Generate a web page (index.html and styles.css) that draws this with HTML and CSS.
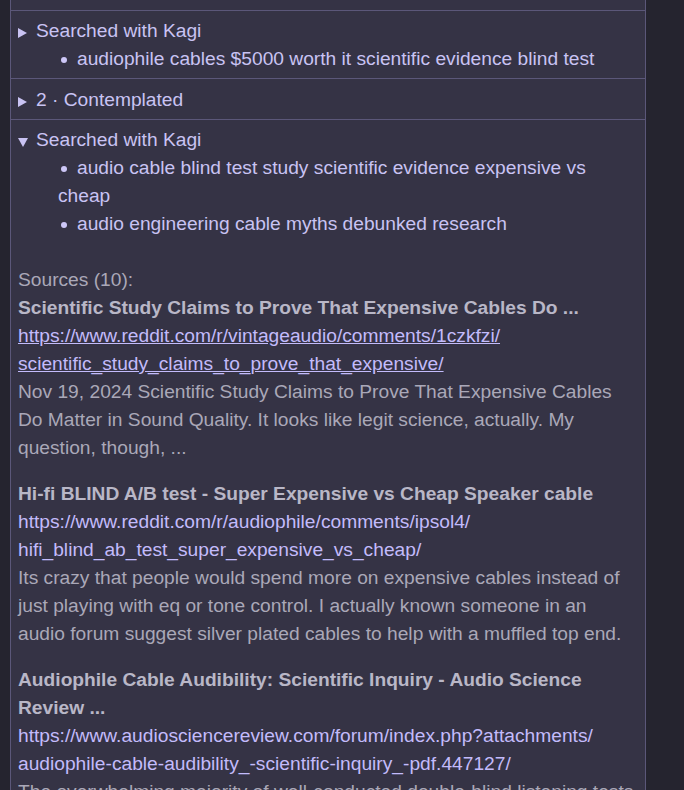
FILE: index.html
```html
<!DOCTYPE html>
<html lang="en">
<head>
<meta charset="utf-8">
<title>Kagi search steps</title>
<link rel="stylesheet" href="styles.css">
</head>
<body>
<div class="panel">
  <div class="prev"></div>
  <div class="step">
    <details><summary>Searched with Kagi</summary></details>
    <ul class="queries">
      <li>audiophile cables $5000 worth it scientific evidence blind test</li>
    </ul>
  </div>
  <div class="step single">
    <details><summary>2 · Contemplated</summary></details>
  </div>
  <div class="step">
    <details open>
      <summary>Searched with Kagi</summary>
      <ul class="queries">
        <li>audio cable blind test study scientific evidence expensive vs cheap</li>
        <li>audio engineering cable myths debunked research</li>
      </ul>
      <div class="sources">
        <p class="sources-head">Sources (10):</p>
        <div class="source">
          <p class="title">Scientific Study Claims to Prove That Expensive Cables Do ...</p>
          <a class="url hover" href="#">https://www.reddit.com/r/vintageaudio/comments/1czkfzi/<br>scientific_study_claims_to_prove_that_expensive/</a>
          <p class="desc">Nov 19, 2024 Scientific Study Claims to Prove That Expensive Cables Do Matter in Sound Quality. It looks like legit science, actually. My question, though, ...</p>
        </div>
        <div class="source">
          <p class="title">Hi-fi BLIND A/B test - Super Expensive vs Cheap Speaker cable</p>
          <a class="url" href="#">https://www.reddit.com/r/audiophile/comments/ipsol4/<br>hifi_blind_ab_test_super_expensive_vs_cheap/</a>
          <p class="desc">Its crazy that people would spend more on expensive cables instead of just playing with eq or tone control. I actually known someone in an audio forum suggest silver plated cables to help with a muffled top end.</p>
        </div>
        <div class="source">
          <p class="title">Audiophile Cable Audibility: Scientific Inquiry - Audio Science Review ...</p>
          <a class="url" href="#">https://www.audiosciencereview.com/forum/index.php?attachments/<br>audiophile-cable-audibility_-scientific-inquiry_-pdf.447127/</a>
          <p class="desc">The overwhelming majority of well-conducted double-blind listening tests have found no audible differences between properly built cables of different prices.</p>
        </div>
      </div>
    </details>
  </div>
</div>
</body>
</html>
```

FILE: styles.css
```css
html, body {
  margin: 0;
  padding: 0;
  background: #25242f;
  height: 100%;
  overflow: hidden;
}
body {
  font-family: "Liberation Sans", Arial, sans-serif;
  font-size: 19.2px;
  line-height: 28px;
  color: #c9c3f3;
}
.panel {
  margin-left: 10px;
  width: 634px;
  background: #353345;
  border-left: 1px solid #5b5779;
  border-right: 1px solid #5b5779;
}
.prev {
  height: 10px;
}
.step {
  border-top: 1px solid #5b5779;
  padding: 6px 7px 5px;
}
.step.single {
  padding-top: 7px;
  padding-bottom: 5px;
}
details > summary {
  display: block;
  cursor: pointer;
  list-style: none;
}
details > summary::-webkit-details-marker { display: none; }
details > summary::before {
  content: "";
  display: inline-block;
  width: 0;
  height: 0;
  border-top: 5px solid transparent;
  border-bottom: 5px solid transparent;
  border-left: 9px solid #c9c3f3;
  margin-left: 0;
  margin-right: 9px;
  vertical-align: -1px;
}
details[open] > summary::before {
  border-left: 5px solid transparent;
  border-right: 5px solid transparent;
  border-top: 9px solid #c9c3f3;
  border-bottom: 0;
  margin-left: 0;
  margin-right: 8px;
  vertical-align: -1px;
}
.queries {
  margin: 0;
  padding-left: 40px;
  list-style: none;
}
.queries li::before {
  content: "";
  display: inline-block;
  width: 6px;
  height: 6px;
  border-radius: 50%;
  background: #cdc7f7;
  margin-left: 3px;
  margin-right: 10px;
  vertical-align: 2px;
}
.sources {
  margin-top: 28px;
  color: #aaa8b8;
  padding-bottom: 20px;
}
.sources p { margin: 0; }
.source + .source { margin-top: 18px; }
.title {
  font-weight: bold;
  color: #b9b7c7;
}
.url {
  display: block;
  color: #c3bbfb;
  text-decoration: none;
}
.url.hover { text-decoration: underline; }
.desc { color: #aaa8b8; }
```
